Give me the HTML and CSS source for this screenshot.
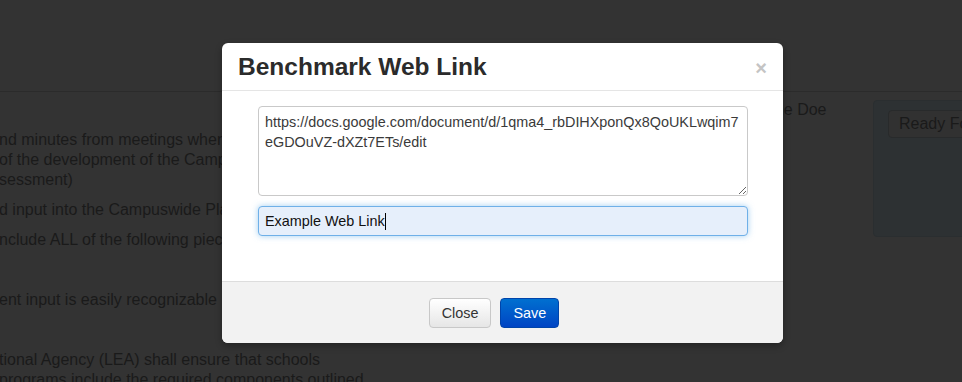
FILE: index.html
```html
<!DOCTYPE html>
<html>
<head>
  <title>Benchmark Web Link</title>
  <link rel="stylesheet" href="styles.css">
</head>
<body>
  <div class="topbar"></div>
  <div class="main">
    <div class="left">
      <p class="para first">nd minutes from meetings where parents were involved in the review<br>of the development of the Campuswide Plan (Comprehensive<br>sessment)</p>
      <p class="para">d input into the Campuswide Plan is documented</p>
      <p class="para">nclude ALL of the following pieces of evidence</p>
      <p class="para gap">ent input is easily recognizable</p>
      <p class="para gap">tional Agency (LEA) shall ensure that schools<br>programs include the required components outlined</p>
    </div>
    <div class="side">
      <div class="name">Jane Doe</div>
    </div>
    <div class="panel">
      <div class="ready">Ready For Review</div>
    </div>
  </div>

  <div class="modal">
    <div class="modal-header">
      <h3>Benchmark Web Link</h3>
      <span class="close">&times;</span>
    </div>
    <div class="modal-body">
      <textarea class="url" spellcheck="false">https://docs.google.com/document/d/1qma4_rbDIHXponQx8QoUKLwqim7eGDOuVZ-dXZt7ETs/edit</textarea>
      <div class="title-input">Example Web Link<span class="caret"></span></div>
    </div>
    <div class="modal-footer">
      <button class="btn">Close</button>
      <button class="btn btn-primary">Save</button>
    </div>
  </div>
</body>
</html>
```

FILE: styles.css
```css
body {
  margin: 0;
  background: #333333;
  font-family: "Liberation Sans", Arial, Helvetica, sans-serif;
  color: #1a1a1a;
  overflow: hidden;
  height: 382px;
}

.topbar {
  height: 91px;
  border-bottom: 1px solid #2b2b2b;
}

.main {
  display: flex;
}

.left {
  flex: 0 0 755px;
  padding-top: 38px;
  font-size: 16px;
  line-height: 20px;
  white-space: nowrap;
  overflow: hidden;
}

.para {
  margin: 0 0 10px -1px;
}

.para.gap {
  margin-top: 40px;
}

.side {
  flex: 0 0 115px;
  padding: 8px 0 0 3px;
  font-size: 16px;
  line-height: 20px;
}

.panel {
  flex: 0 0 120px;
  margin-top: 8px;
  height: 137px;
  box-sizing: border-box;
  background: #2d3133;
  border: 1px solid #2a2e30;
  border-radius: 4px;
  padding: 9px 0 0 14px;
}

.ready {
  height: 28px;
  box-sizing: border-box;
  background: #313131;
  border: 1px solid #282a2b;
  border-radius: 4px;
  padding: 0 10px;
  line-height: 26px;
  font-size: 16px;
  white-space: nowrap;
  overflow: hidden;
  color: #1a1a1a;
}

/* modal */
.modal {
  position: absolute;
  left: 222px;
  top: 43px;
  width: 561px;
  background: #ffffff;
  border-radius: 6px;
  box-shadow: 0 3px 7px rgba(0,0,0,0.3);
}

.modal-header {
  display: flex;
  justify-content: space-between;
  align-items: center;
  padding: 9px 16px 8px 16px;
  border-bottom: 1px solid #e5e5e5;
}

.modal-header h3 {
  margin: 0;
  font-size: 24.5px;
  line-height: 30px;
  font-weight: bold;
  color: #2b2b2b;
}

.close {
  font-size: 20px;
  font-weight: bold;
  color: #c4c4c4;
  line-height: 20px;
  margin-top: 1px;
}

.modal-body {
  padding: 15px 35px 45px 36px;
}

.url {
  display: block;
  box-sizing: border-box;
  width: 490px;
  height: 90px;
  margin: 0;
  padding: 5px 3px 5px 6px;
  border: 1px solid #c9c9c9;
  border-radius: 4px;
  font-family: "Liberation Sans", Arial, Helvetica, sans-serif;
  font-size: 14.4px;
  line-height: 20px;
  color: #3a3a3a;
  resize: vertical;
}

.title-input {
  margin-top: 10px;
  box-sizing: border-box;
  width: 490px;
  height: 30px;
  padding: 0 6px;
  border: 1px solid #6fb0e8;
  border-radius: 4px;
  background: #e6effb;
  box-shadow: 0 0 6px rgba(102,175,233,0.6);
  font-size: 14.4px;
  line-height: 28px;
  color: #111111;
}

.caret {
  display: inline-block;
  width: 1px;
  height: 17px;
  background: #000;
  vertical-align: -4px;
}

.modal-footer {
  display: flex;
  justify-content: center;
  gap: 9px;
  padding: 16px 17px 15px 0;
  background: #f2f2f2;
  border-top: 1px solid #dddddd;
  border-radius: 0 0 6px 6px;
}

.btn {
  height: 30px;
  padding: 0 12px;
  border: 1px solid #c8c8c8;
  border-radius: 4px;
  background: linear-gradient(#ffffff, #e6e6e6);
  font-family: "Liberation Sans", Arial, Helvetica, sans-serif;
  font-size: 14.4px;
  color: #333333;
}

.btn-primary {
  border-color: #0044aa;
  background: linear-gradient(#0070d0, #0044c4);
  color: #ffffff;
}
```
